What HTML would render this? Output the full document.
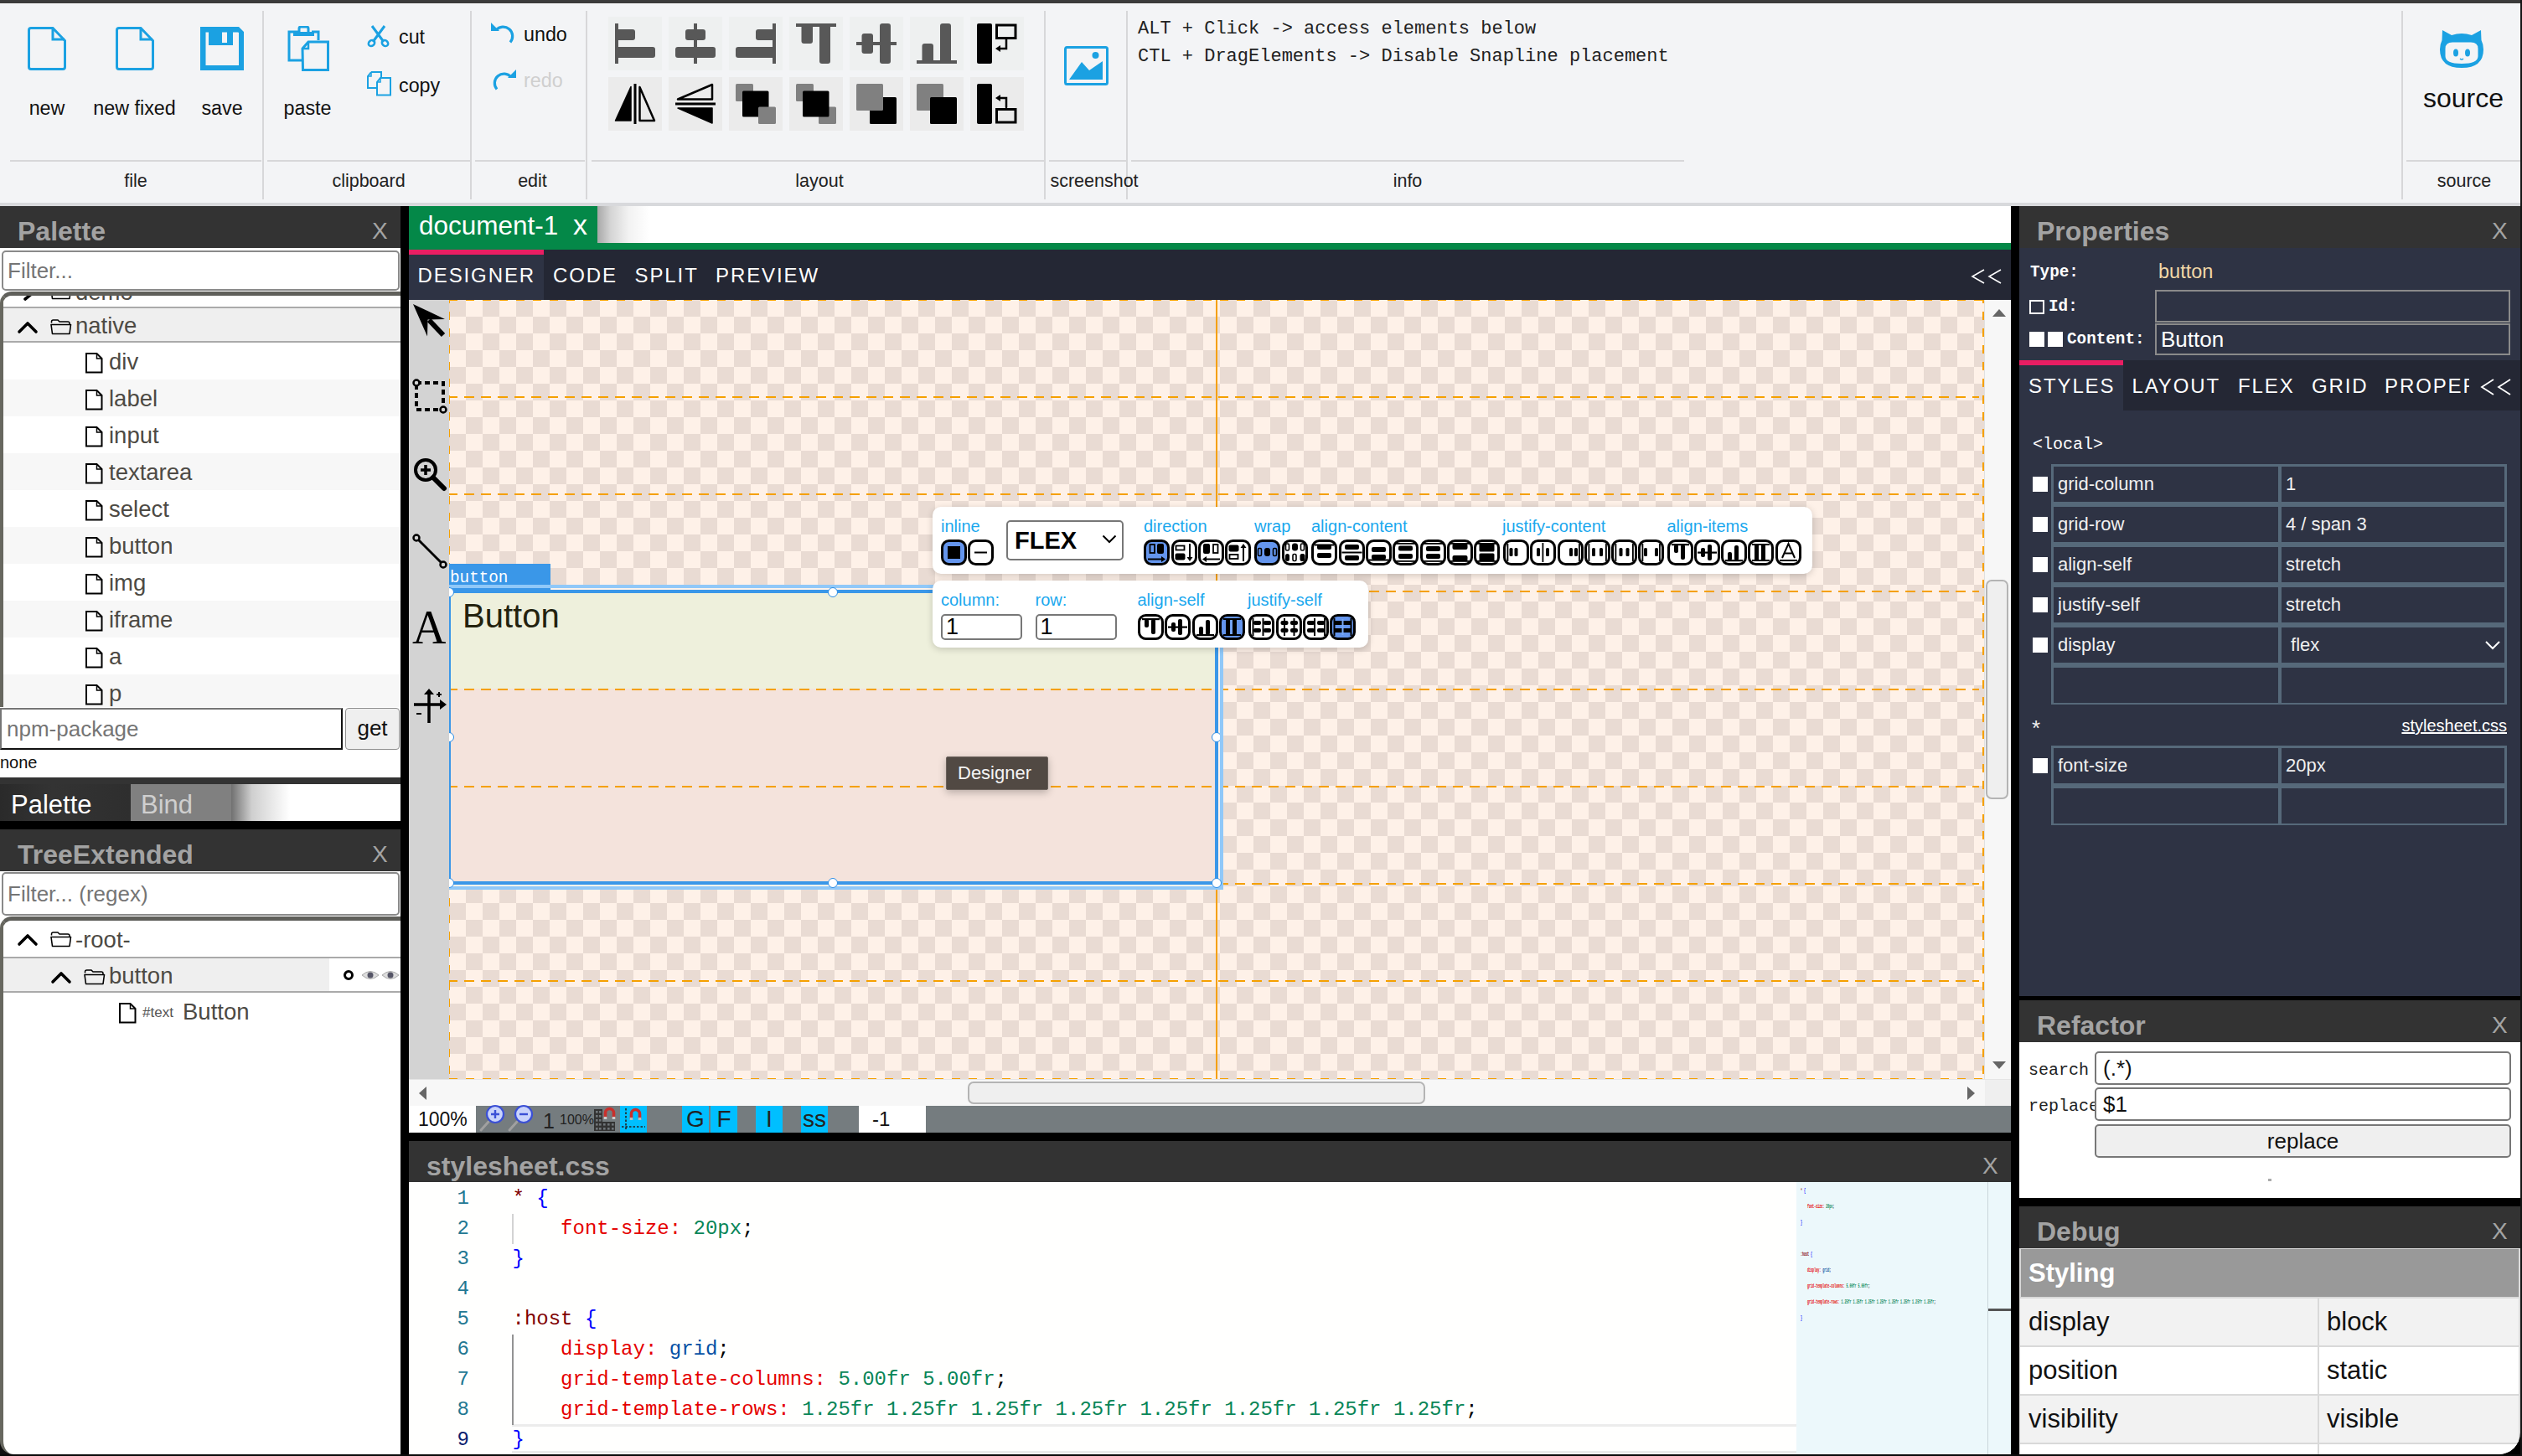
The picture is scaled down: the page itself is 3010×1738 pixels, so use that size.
<!DOCTYPE html>
<html><head><meta charset="utf-8">
<style>
*{box-sizing:border-box;margin:0;padding:0}
html,body{width:3010px;height:1738px;overflow:hidden;background:#000;font-family:"Liberation Sans",sans-serif}
.a{position:absolute}
.mono{font-family:"Liberation Mono",monospace}
#top{left:0;top:0;width:3010px;height:4px;background:#3b3b3b}
#ribbon{left:0;top:4px;width:3008px;height:242px;background:#f3f4f6;border-top:1px solid #fff}
#ribbon .sep{width:2px;background:#d7d7d9;top:8px;height:225px}
#ribbon .hl{height:2px;background:#d7d7d9;top:186px}
#ribbon .gl{top:199px;font-size:21.5px;color:#222;text-align:center}
.bl{font-size:23.3px;color:#111;text-align:center;white-space:nowrap}
#ribbonbottom{left:0;top:242px;width:3008px;height:4px;background:#d8d9dc}
.hdr{background:#333;height:50px}
.hdr .t{left:21px;top:12px;font-size:32px;font-weight:bold;color:#a3a3a3}
.hdr .x{top:14px;font-size:28px;color:#a3a3a3}
.inp{background:#fff;border:2px solid #8a8a8a;border-radius:5px;overflow:hidden}
.inp span{position:absolute;top:50%;transform:translateY(-50%);font-size:26px;color:#757575;white-space:nowrap}
.tbox{border-top:5px solid #5f5f5a;border-left:4px solid #67675f;border-top-left-radius:14px;background:#fff;overflow:hidden}
.row{left:0;width:474px}
.row.sel{background:#efefef;border-top:2px solid #aaa;border-bottom:2px solid #aaa}
.tx{top:50%;transform:translateY(-46%);font-size:27.5px;color:#4d4a44;white-space:nowrap}
.nav{font-size:24px;color:#fff;letter-spacing:1.9px;line-height:30px}
.checker{background:conic-gradient(#fef1e8 25%,#e9dbd3 0 50%,#fef1e8 0 75%,#e9dbd3 0);background-size:40px 40px}
.hd{height:2px;background-image:linear-gradient(90deg,#f5a000 12px,transparent 12px);background-size:20px 2px;background-position:18px 0}
.vd{width:2px;background-image:linear-gradient(180deg,#f5a000 11px,transparent 11px);background-size:2px 20px}
.hdl{width:12px;height:12px;border-radius:50%;background:#fff;border:1.5px solid #2a8de6}
.code{font-size:24px;line-height:36px;white-space:pre}
.mm{font-size:8px;line-height:10px;white-space:pre;transform:scaleX(0.42);transform-origin:0 0;font-weight:bold}
.pl{font-size:19.3px;font-weight:bold;color:#fff;line-height:26px}
.cell{background:#2e3344;font-size:22px;line-height:42px;color:#f0f0f0;text-indent:5px;white-space:nowrap}
.dbg{font-size:31px;line-height:56px;color:#111}
.pop{background:#fff;border-radius:10px;box-shadow:0 2px 8px rgba(0,0,0,.18)}
.plab{font-size:20px;line-height:26px;color:#1aa8ee;white-space:nowrap}
</style></head><body>
<div id="top" class="a"></div>
<div id="ribbon" class="a">
<div class="a sep" style="left:313px"></div>
<div class="a sep" style="left:561px"></div>
<div class="a sep" style="left:699px"></div>
<div class="a sep" style="left:1246px"></div>
<div class="a sep" style="left:1344px"></div>
<div class="a sep" style="left:2866px"></div>
<div class="a hl" style="left:12px;width:300px"></div>
<div class="a hl" style="left:319px;width:242px"></div>
<div class="a hl" style="left:567px;width:131px"></div>
<div class="a hl" style="left:706px;width:540px"></div>
<div class="a hl" style="left:1252px;width:92px"></div>
<div class="a hl" style="left:1350px;width:660px"></div>
<div class="a hl" style="left:2872px;width:136px"></div>
<div class="a gl" style="left:12px;width:300px">file</div>
<div class="a gl" style="left:319px;width:242px">clipboard</div>
<div class="a gl" style="left:567px;width:137px">edit</div>
<div class="a gl" style="left:706px;width:544px">layout</div>
<div class="a gl" style="left:1252px;width:108px">screenshot</div>
<div class="a gl" style="left:1350px;width:660px">info</div>
<div class="a gl" style="left:2872px;width:138px">source</div>
</div>
<div id="ribbonbottom" class="a"></div>
<!-- file icons -->
<svg class="a" style="left:33px;top:32px" width="46" height="52" viewBox="0 0 46 52"><path d="M4 1.5 H30 L44.5 16.5 V48 Q44.5 50.5 42 50.5 H4 Q1.5 50.5 1.5 48 V4 Q1.5 1.5 4 1.5 Z" fill="none" stroke="#1ba1e2" stroke-width="3"/><path d="M30 1.5 V15 H44" fill="none" stroke="#1ba1e2" stroke-width="3"/></svg>
<svg class="a" style="left:138px;top:32px" width="46" height="52" viewBox="0 0 46 52"><path d="M4 1.5 H30 L44.5 16.5 V48 Q44.5 50.5 42 50.5 H4 Q1.5 50.5 1.5 48 V4 Q1.5 1.5 4 1.5 Z" fill="none" stroke="#1ba1e2" stroke-width="3"/><path d="M30 1.5 V15 H44" fill="none" stroke="#1ba1e2" stroke-width="3"/></svg>
<svg class="a" style="left:239px;top:32px" width="53" height="52" viewBox="0 0 53 52"><path d="M0 0 H46 L52 6 V52 H0 Z M6.5 6.5 V46 H46 V7 L45 6.5 H39 V22 H10 V6.5 Z M26 6.5 V19 H32 V6.5 Z" fill="#1ba1e2" fill-rule="evenodd"/></svg>
<div class="a bl" style="left:20px;width:72px;top:115.5px">new</div>
<div class="a bl" style="left:100px;width:121px;top:115.5px">new fixed</div>
<div class="a bl" style="left:229px;width:72px;top:115.5px">save</div>
<!-- clipboard -->
<svg class="a" style="left:343px;top:31px" width="51" height="54" viewBox="0 0 51 54"><path d="M14 7 H2 V41 H17" fill="none" stroke="#1ba1e2" stroke-width="3"/><path d="M29 7 H37 V17" fill="none" stroke="#1ba1e2" stroke-width="3"/><rect x="7" y="7" width="25" height="5" fill="#1ba1e2"/><path d="M14 7 V3 Q14 1 16 1 H23 Q25 1 25 3 V7" fill="none" stroke="#1ba1e2" stroke-width="3"/><path d="M18 27 L25 19 H48.5 V52.5 H18.5 Z" fill="none" stroke="#1ba1e2" stroke-width="3"/><path d="M25 19 V27 H18" fill="none" stroke="#1ba1e2" stroke-width="2.5"/></svg>
<div class="a bl" style="left:326px;width:82px;top:115.5px">paste</div>
<svg class="a" style="left:438px;top:30px" width="27" height="27" viewBox="0 0 27 27"><path d="M6 1 L20 20 M21 1 L7 20" stroke="#1ba1e2" stroke-width="3"/><ellipse cx="5.5" cy="21.5" rx="4" ry="3.2" transform="rotate(-40 5.5 21.5)" fill="none" stroke="#1ba1e2" stroke-width="2.5"/><ellipse cx="21.5" cy="21.5" rx="4" ry="3.2" transform="rotate(40 21.5 21.5)" fill="none" stroke="#1ba1e2" stroke-width="2.5"/></svg>
<div class="a bl" style="left:476px;top:31px">cut</div>
<svg class="a" style="left:438px;top:85px" width="29" height="30" viewBox="0 0 29 30"><path d="M5 1 H17 V8 M12 20 H1 V6 L5 1" fill="none" stroke="#1ba1e2" stroke-width="2"/><path d="M1 6 H5 V1" fill="none" stroke="#1ba1e2" stroke-width="1.5"/><path d="M16 8 H28 V28.5 H12 V13 Z" fill="none" stroke="#1ba1e2" stroke-width="2"/><path d="M16 8 V13 H12" fill="none" stroke="#1ba1e2" stroke-width="1.5"/></svg>
<div class="a bl" style="left:476px;top:88.5px">copy</div>
<!-- edit -->
<svg class="a" style="left:586px;top:27px" width="30" height="26" viewBox="0 0 30 26"><path d="M6 9 A11 11 0 1 1 23 23.5" fill="none" stroke="#1ba1e2" stroke-width="3.2"/><path d="M0 0 V10 H10 Z" fill="#1ba1e2"/></svg>
<div class="a bl" style="left:625px;top:27.5px">undo</div>
<svg class="a" style="left:586px;top:83px" width="30" height="26" viewBox="0 0 30 26"><path d="M24 9 A11 11 0 1 0 7 23.5" fill="none" stroke="#1ba1e2" stroke-width="3.2"/><path d="M30 0 V10 H20 Z" fill="#1ba1e2"/></svg>
<div class="a bl" style="left:625px;top:83px;color:#cfcfcf">redo</div>
<!-- layout -->
<div class="a" style="left:726px;top:20px;width:64px;height:64px;background:#eef0f0"><svg width="64" height="64" viewBox="0 0 64 64"><g fill="#585858"><rect x="8" y="8" width="4" height="48"/><rect x="9" y="15" width="23" height="13" rx="3"/><rect x="9" y="36" width="47" height="13" rx="3"/></g></svg></div>
<div class="a" style="left:798px;top:20px;width:64px;height:64px;background:#eef0f0"><svg width="64" height="64" viewBox="0 0 64 64"><g fill="#585858"><rect x="30" y="8" width="4" height="48"/><rect x="20" y="15" width="24" height="13" rx="3"/><rect x="8" y="36" width="48" height="13" rx="3"/></g></svg></div>
<div class="a" style="left:870px;top:20px;width:64px;height:64px;background:#eef0f0"><svg width="64" height="64" viewBox="0 0 64 64"><g fill="#585858"><rect x="52" y="8" width="4" height="48"/><rect x="32" y="15" width="23" height="13" rx="3"/><rect x="8" y="36" width="47" height="13" rx="3"/></g></svg></div>
<div class="a" style="left:942px;top:20px;width:64px;height:64px;background:#eef0f0"><svg width="64" height="64" viewBox="0 0 64 64"><g fill="#585858"><rect x="8" y="8" width="48" height="4"/><rect x="14.5" y="9" width="13.5" height="23" rx="3"/><rect x="36" y="9" width="13" height="47" rx="3"/></g></svg></div>
<div class="a" style="left:1014px;top:20px;width:64px;height:64px;background:#eef0f0"><svg width="64" height="64" viewBox="0 0 64 64"><g fill="#585858"><rect x="8" y="30" width="48" height="4"/><rect x="14.5" y="20" width="13.5" height="24" rx="3"/><rect x="36" y="8" width="13" height="48" rx="3"/></g></svg></div>
<div class="a" style="left:1086px;top:20px;width:64px;height:64px;background:#eef0f0"><svg width="64" height="64" viewBox="0 0 64 64"><g fill="#585858"><rect x="8" y="52" width="48" height="4"/><rect x="14.5" y="32" width="13.5" height="23" rx="3"/><rect x="36" y="8" width="13" height="47" rx="3"/></g></svg></div>
<div class="a" style="left:1158px;top:20px;width:64px;height:64px;background:#eef0f0"><svg width="64" height="64" viewBox="0 0 64 64"><rect x="8" y="8" width="18" height="48" rx="2"/><rect x="31.5" y="10" width="22.5" height="15.5" fill="none" stroke="#000" stroke-width="3"/><path d="M43 27 V38 H34" fill="none" stroke="#000" stroke-width="2.5" stroke-linecap="round"/><path d="M30 38 L36 34 V42 Z"/></svg></div>
<div class="a" style="left:726px;top:92px;width:64px;height:64px;background:#ebebeb"><svg width="64" height="64" viewBox="0 0 64 64"><path d="M27 11.5 L8.5 52 H27 Z" stroke="#000" stroke-width="1.5" stroke-linejoin="round"/><rect x="30.5" y="8" width="3" height="48"/><path d="M37.5 12 V52 H55 Z" fill="none" stroke="#000" stroke-width="2.5" stroke-linejoin="round"/></svg></div>
<div class="a" style="left:798px;top:92px;width:64px;height:64px;background:#ebebeb"><svg width="64" height="64" viewBox="0 0 64 64"><path d="M11 26.5 L52 9 V26.5 Z" fill="none" stroke="#000" stroke-width="2.5" stroke-linejoin="round"/><rect x="8" y="30.5" width="48" height="3"/><path d="M11 37 H52 V55 Z" stroke="#000" stroke-width="1.5" stroke-linejoin="round"/></svg></div>
<div class="a" style="left:870px;top:92px;width:64px;height:64px;background:#ebebeb"><svg width="64" height="64" viewBox="0 0 64 64"><rect x="8" y="8" width="21" height="21" rx="1.5" fill="#808080"/><rect x="16" y="16.5" width="31.5" height="31" rx="1.5"/><rect x="35" y="35.5" width="21" height="20.5" rx="1.5" fill="#808080"/></svg></div>
<div class="a" style="left:942px;top:92px;width:64px;height:64px;background:#ebebeb"><svg width="64" height="64" viewBox="0 0 64 64"><rect x="8" y="8" width="21" height="21" rx="1.5" fill="#808080"/><rect x="35" y="35.5" width="21" height="20.5" rx="1.5" fill="#808080"/><rect x="16" y="16.5" width="31.5" height="31" rx="1.5"/></svg></div>
<div class="a" style="left:1014px;top:92px;width:64px;height:64px;background:#ebebeb"><svg width="64" height="64" viewBox="0 0 64 64"><rect x="24" y="24" width="32" height="32" rx="1.5"/><rect x="8" y="8" width="32" height="32" rx="1.5" fill="#808080"/></svg></div>
<div class="a" style="left:1086px;top:92px;width:64px;height:64px;background:#ebebeb"><svg width="64" height="64" viewBox="0 0 64 64"><rect x="8" y="8" width="32" height="32" rx="1.5" fill="#808080"/><rect x="24" y="24" width="32" height="32" rx="1.5"/></svg></div>
<div class="a" style="left:1158px;top:92px;width:64px;height:64px;background:#ebebeb"><svg width="64" height="64" viewBox="0 0 64 64"><rect x="8" y="8" width="18" height="48" rx="2"/><rect x="31.5" y="38.5" width="22.5" height="15.5" fill="none" stroke="#000" stroke-width="3"/><path d="M43 36 V25 H34" fill="none" stroke="#000" stroke-width="2.5" stroke-linecap="round"/><path d="M30 25 L36 21 V29 Z"/></svg></div>
<!-- screenshot -->
<svg class="a" style="left:1270px;top:55px" width="53" height="47" viewBox="0 0 53 47"><rect x="1.5" y="1.5" width="50" height="44" rx="2" fill="none" stroke="#1ba1e2" stroke-width="3"/><circle cx="37.5" cy="11" r="4" fill="#1ba1e2"/><path d="M6 40 L21 19 L30 29 L46 18 V40 Z" fill="#1ba1e2"/></svg>
<!-- info -->
<div class="a mono" style="left:1358px;top:17.5px;font-size:22px;line-height:33px;color:#222;white-space:pre">ALT + Click -&gt; access elements below
CTL + DragElements -&gt; Disable Snapline placement</div>
<!-- source -->
<svg class="a" style="left:2911px;top:35px" width="54" height="47" viewBox="0 0 54 47"><path d="M4 1 L15 7 Q27 3 39 7 L50 1 L50.5 13 Q53 18 53 24 Q53 46 27 46 Q1 46 1 24 Q1 18 3.5 13 Z" fill="#1ba1e2"/><path d="M7.5 23 Q7.5 15.5 16 15.5 H38 Q46.5 15.5 46.5 23 V32 Q46.5 41 27 41 Q7.5 41 7.5 32 Z" fill="#f3f4f6"/><ellipse cx="20" cy="28" rx="3" ry="4.5" fill="#1ba1e2"/><ellipse cx="34" cy="28" rx="3" ry="4.5" fill="#1ba1e2"/><path d="M25 35 Q27 37 29 35" fill="none" stroke="#1ba1e2" stroke-width="1.2"/></svg>
<div class="a" style="left:2872px;width:136px;top:99px;font-size:32px;color:#111;text-align:center">source</div>


<!-- LEFT PANEL -->
<div class="a" style="left:0;top:246px;width:478px;height:1492px;background:#fff"></div>
<div class="a hdr" style="left:0;top:246px;width:478px"><div class="a t">Palette</div><div class="a x" style="left:444px">X</div></div>
<div class="a inp" style="left:2px;top:299px;width:475px;height:48px"><span style="left:5px">Filter...</span></div>
<div class="a tbox" style="left:0;top:348px;width:478px;height:496px">
 <div class="a" style="left:0;top:0;width:474px;height:496px;overflow:hidden">
  <div class="a row" style="top:-27px;height:44px;background:#fff"><svg class="a" style="left:18px;top:12px" width="26" height="22" viewBox="0 0 26 22"><path d="M8 3 L18 11 L8 19" fill="none" stroke="#000" stroke-width="3.6" stroke-linecap="round" stroke-linejoin="round"/></svg><svg class="a" style="left:56px;top:13px" width="26" height="19" viewBox="0 0 26 19"><path d="M1.5 4.5 V3 Q1.5 1 3.5 1 H9 L11 3 H21 Q23 3 23 5 V6" fill="none" stroke="#000" stroke-width="1.5"/><path d="M1 6.5 H24.5 L23 17.5 H2.5 Z" fill="none" stroke="#000" stroke-width="1.6" stroke-linejoin="round"/></svg><span class="a tx" style="left:86px">demo</span></div>
  <div class="a row sel" style="top:13px;height:43px"><svg class="a" style="left:16px;top:14px" width="26" height="17" viewBox="0 0 26 17"><path d="M3 14 L13 4 L23 14" fill="none" stroke="#000" stroke-width="3.6" stroke-linecap="round" stroke-linejoin="round"/></svg><svg class="a" style="left:56px;top:13px" width="26" height="19" viewBox="0 0 26 19"><path d="M1.5 4.5 V3 Q1.5 1 3.5 1 H9 L11 3 H21 Q23 3 23 5 V6" fill="none" stroke="#000" stroke-width="1.5"/><path d="M1 6.5 H24.5 L23 17.5 H2.5 Z" fill="none" stroke="#000" stroke-width="1.6" stroke-linejoin="round"/></svg><span class="a tx" style="left:86px">native</span></div>
 <div class="a row" style="top:56px;height:44px;background:#fff"><svg class="a" style="left:98px;top:12px" width="22" height="25" viewBox="0 0 22 25"><path d="M1 1 H13.5 L19.5 7 V23.5 H1 Z" fill="#fff" stroke="#000" stroke-width="2" stroke-linejoin="miter"/><path d="M13.5 1 V7 H19.5" fill="none" stroke="#000" stroke-width="1.5"/></svg><span class="a tx" style="left:126px">div</span></div>
<div class="a row" style="top:100px;height:44px;background:#f7f7f7"><svg class="a" style="left:98px;top:12px" width="22" height="25" viewBox="0 0 22 25"><path d="M1 1 H13.5 L19.5 7 V23.5 H1 Z" fill="#fff" stroke="#000" stroke-width="2" stroke-linejoin="miter"/><path d="M13.5 1 V7 H19.5" fill="none" stroke="#000" stroke-width="1.5"/></svg><span class="a tx" style="left:126px">label</span></div>
<div class="a row" style="top:144px;height:44px;background:#fff"><svg class="a" style="left:98px;top:12px" width="22" height="25" viewBox="0 0 22 25"><path d="M1 1 H13.5 L19.5 7 V23.5 H1 Z" fill="#fff" stroke="#000" stroke-width="2" stroke-linejoin="miter"/><path d="M13.5 1 V7 H19.5" fill="none" stroke="#000" stroke-width="1.5"/></svg><span class="a tx" style="left:126px">input</span></div>
<div class="a row" style="top:188px;height:44px;background:#f7f7f7"><svg class="a" style="left:98px;top:12px" width="22" height="25" viewBox="0 0 22 25"><path d="M1 1 H13.5 L19.5 7 V23.5 H1 Z" fill="#fff" stroke="#000" stroke-width="2" stroke-linejoin="miter"/><path d="M13.5 1 V7 H19.5" fill="none" stroke="#000" stroke-width="1.5"/></svg><span class="a tx" style="left:126px">textarea</span></div>
<div class="a row" style="top:232px;height:44px;background:#fff"><svg class="a" style="left:98px;top:12px" width="22" height="25" viewBox="0 0 22 25"><path d="M1 1 H13.5 L19.5 7 V23.5 H1 Z" fill="#fff" stroke="#000" stroke-width="2" stroke-linejoin="miter"/><path d="M13.5 1 V7 H19.5" fill="none" stroke="#000" stroke-width="1.5"/></svg><span class="a tx" style="left:126px">select</span></div>
<div class="a row" style="top:276px;height:44px;background:#f7f7f7"><svg class="a" style="left:98px;top:12px" width="22" height="25" viewBox="0 0 22 25"><path d="M1 1 H13.5 L19.5 7 V23.5 H1 Z" fill="#fff" stroke="#000" stroke-width="2" stroke-linejoin="miter"/><path d="M13.5 1 V7 H19.5" fill="none" stroke="#000" stroke-width="1.5"/></svg><span class="a tx" style="left:126px">button</span></div>
<div class="a row" style="top:320px;height:44px;background:#fff"><svg class="a" style="left:98px;top:12px" width="22" height="25" viewBox="0 0 22 25"><path d="M1 1 H13.5 L19.5 7 V23.5 H1 Z" fill="#fff" stroke="#000" stroke-width="2" stroke-linejoin="miter"/><path d="M13.5 1 V7 H19.5" fill="none" stroke="#000" stroke-width="1.5"/></svg><span class="a tx" style="left:126px">img</span></div>
<div class="a row" style="top:364px;height:44px;background:#f7f7f7"><svg class="a" style="left:98px;top:12px" width="22" height="25" viewBox="0 0 22 25"><path d="M1 1 H13.5 L19.5 7 V23.5 H1 Z" fill="#fff" stroke="#000" stroke-width="2" stroke-linejoin="miter"/><path d="M13.5 1 V7 H19.5" fill="none" stroke="#000" stroke-width="1.5"/></svg><span class="a tx" style="left:126px">iframe</span></div>
<div class="a row" style="top:408px;height:44px;background:#fff"><svg class="a" style="left:98px;top:12px" width="22" height="25" viewBox="0 0 22 25"><path d="M1 1 H13.5 L19.5 7 V23.5 H1 Z" fill="#fff" stroke="#000" stroke-width="2" stroke-linejoin="miter"/><path d="M13.5 1 V7 H19.5" fill="none" stroke="#000" stroke-width="1.5"/></svg><span class="a tx" style="left:126px">a</span></div>
<div class="a row" style="top:452px;height:44px;background:#f7f7f7"><svg class="a" style="left:98px;top:12px" width="22" height="25" viewBox="0 0 22 25"><path d="M1 1 H13.5 L19.5 7 V23.5 H1 Z" fill="#fff" stroke="#000" stroke-width="2" stroke-linejoin="miter"/><path d="M13.5 1 V7 H19.5" fill="none" stroke="#000" stroke-width="1.5"/></svg><span class="a tx" style="left:126px">p</span></div>
 </div>
</div>
<div class="a inp" style="left:0;top:845px;width:409px;height:50px;border-radius:0;border-color:#767676 #111 #111 #767676"><span style="left:6px">npm-package</span></div>
<div class="a" style="left:412px;top:845px;width:65px;height:50px;background:#efefef;border:1px solid #8f8f8f;border-radius:4px;font-size:26px;text-align:center;line-height:47px;color:#111">get</div>
<div class="a" style="left:0;top:897px;font-size:20px;color:#111;line-height:26px">none</div>
<div class="a" style="left:0;top:928px;width:478px;height:52px;background:#fff"></div>
<div class="a" style="left:0;top:928px;width:478px;height:8px;background:#333"></div>
<div class="a" style="left:0;top:936px;width:156px;height:44px;background:linear-gradient(90deg,#2a2a2a,#333 40%,#2e2e2e)"></div>
<div class="a" style="left:156px;top:936px;width:120px;height:44px;background:#808080"></div>
<div class="a" style="left:276px;top:936px;width:70px;height:44px;background:linear-gradient(90deg,#707070,#cfcfcf 35%,#fff)"></div>
<div class="a" style="left:13px;top:940px;font-size:31px;color:#fff;line-height:42px">Palette</div>
<div class="a" style="left:168px;top:940px;font-size:31px;color:#cfcfcf;line-height:42px">Bind</div>
<div class="a" style="left:0;top:980px;width:478px;height:10px;background:#000"></div>
<div class="a hdr" style="left:0;top:990px;width:478px"><div class="a t" style="left:21px">TreeExtended</div><div class="a x" style="left:444px">X</div></div>
<div class="a inp" style="left:2px;top:1041px;width:475px;height:52px"><span style="left:5px">Filter... (regex)</span></div>
<div class="a" style="left:0;top:1700px;width:40px;height:38px;background:#111"></div>
<div class="a tbox" style="left:0;top:1094px;width:478px;height:642px;border-bottom-left-radius:16px">
  <div class="a row" style="top:0;height:44px;background:#fff"><svg class="a" style="left:16px;top:14px" width="26" height="17" viewBox="0 0 26 17"><path d="M3 14 L13 4 L23 14" fill="none" stroke="#000" stroke-width="3.6" stroke-linecap="round" stroke-linejoin="round"/></svg><svg class="a" style="left:56px;top:13px" width="26" height="19" viewBox="0 0 26 19"><path d="M1.5 4.5 V3 Q1.5 1 3.5 1 H9 L11 3 H21 Q23 3 23 5 V6" fill="none" stroke="#000" stroke-width="1.5"/><path d="M1 6.5 H24.5 L23 17.5 H2.5 Z" fill="none" stroke="#000" stroke-width="1.6" stroke-linejoin="round"/></svg><span class="a tx" style="left:86px">-root-</span></div>
  <div class="a row sel" style="top:43px;height:43px;width:389px"><svg class="a" style="left:56px;top:14px" width="26" height="17" viewBox="0 0 26 17"><path d="M3 14 L13 4 L23 14" fill="none" stroke="#000" stroke-width="3.6" stroke-linecap="round" stroke-linejoin="round"/></svg><svg class="a" style="left:96px;top:13px" width="26" height="19" viewBox="0 0 26 19"><path d="M1.5 4.5 V3 Q1.5 1 3.5 1 H9 L11 3 H21 Q23 3 23 5 V6" fill="none" stroke="#000" stroke-width="1.5"/><path d="M1 6.5 H24.5 L23 17.5 H2.5 Z" fill="none" stroke="#000" stroke-width="1.6" stroke-linejoin="round"/></svg><span class="a tx" style="left:126px">button</span></div>
  <div class="a" style="left:389px;top:43px;width:85px;height:43px;background:#fff;border-top:2px solid #aaa;border-bottom:2px solid #aaa"></div>
  <svg class="a" style="left:404px;top:57px" width="72" height="16" viewBox="0 0 72 16"><circle cx="8" cy="8" r="4.5" fill="none" stroke="#000" stroke-width="3"/><path d="M24 8 Q34 -1 44 8 Q34 17 24 8 Z" fill="#ddd" stroke="#aaa" stroke-width="1"/><circle cx="34" cy="8" r="3.5" fill="#556"/><path d="M48 8 Q58 -1 68 8 Q58 17 48 8 Z" fill="#ddd" stroke="#aaa" stroke-width="1"/><circle cx="58" cy="8" r="3.5" fill="#556"/></svg>
  <div class="a row" style="top:86px;height:44px;background:#fff"><svg class="a" style="left:138px;top:12px" width="22" height="25" viewBox="0 0 22 25"><path d="M1 1 H13.5 L19.5 7 V23.5 H1 Z" fill="#fff" stroke="#000" stroke-width="2" stroke-linejoin="miter"/><path d="M13.5 1 V7 H19.5" fill="none" stroke="#000" stroke-width="1.5"/></svg><span class="a" style="left:166px;top:14px;font-size:17px;color:#555">#text</span><span class="a tx" style="left:214px">Button</span></div>
</div>
<div class="a" style="left:478px;top:246px;width:10px;height:1492px;background:#000"></div>

<!-- CENTER -->
<div class="a" style="left:488px;top:246px;width:1912px;height:44px;background:#fff"></div>
<div class="a" style="left:713px;top:246px;width:62px;height:44px;background:linear-gradient(90deg,#a8a8a8,#d4d4d4 25%,#f2f2f2 60%,#fff)"></div>
<div class="a" style="left:488px;top:246px;width:225px;height:44px;background:#048848"></div>
<div class="a" style="left:500px;top:250px;font-size:31.5px;color:#fff;line-height:38px;white-space:pre">document-1</div>
<div class="a" style="left:684px;top:249px;font-size:34px;color:#fff;line-height:38px">x</div>
<div class="a" style="left:488px;top:290px;width:1912px;height:8px;background:#048848"></div>
<div class="a" style="left:488px;top:298px;width:1912px;height:60px;background:#242734"></div>
<div class="a" style="left:488px;top:298px;width:161px;height:60px;background:#2e3344"></div>
<div class="a" style="left:488px;top:298px;width:161px;height:6px;background:#e91e63"></div>
<div class="a nav" style="left:498.5px;top:314px">DESIGNER</div>
<div class="a nav" style="left:660px;top:314px">CODE</div>
<div class="a nav" style="left:757.5px;top:314px">SPLIT</div>
<div class="a nav" style="left:854px;top:314px">PREVIEW</div>
<svg class="a" style="left:2352px;top:320px" width="38" height="20" viewBox="0 0 38 20"><path d="M16 2 L2 10 L16 18 M36 2 L22 10 L36 18" fill="none" stroke="#fff" stroke-width="1.6"/></svg>
<div class="a" style="left:488px;top:358px;width:48px;height:930px;background:#d3d3d3"></div>
<div class="a checker" style="left:536px;top:358px;width:1833px;height:930px"></div>
<div class="a" style="left:536px;top:706px;width:916px;height:116px;background:#eef0dc"></div>
<div class="a" style="left:536px;top:822px;width:916px;height:232px;background:#f4e3dc"></div>
<div class="a" style="left:536px;top:358px;width:1831px;height:1.2px;background-image:linear-gradient(90deg,#f5a000 10px,transparent 10px);background-size:20px 2px"></div>
<div class="a hd" style="left:536px;top:473.12px;width:1826px"></div>
<div class="a hd" style="left:536px;top:589.25px;width:1826px"></div>
<div class="a hd" style="left:536px;top:705.38px;width:1826px"></div>
<div class="a hd" style="left:536px;top:821.50px;width:1826px"></div>
<div class="a hd" style="left:536px;top:937.62px;width:1826px"></div>
<div class="a hd" style="left:536px;top:1053.75px;width:1826px"></div>
<div class="a hd" style="left:536px;top:1169.88px;width:1826px"></div>
<div class="a" style="left:536px;top:1286.5px;width:1831px;height:1.2px;background-image:linear-gradient(90deg,#f5a000 10px,transparent 10px);background-size:20px 2px"></div>
<div class="a" style="left:536px;top:358px;width:1.2px;height:930px;background-image:linear-gradient(180deg,#f5a000 10px,transparent 10px);background-size:2px 20px;background-position:0 14px"></div>
<div class="a" style="left:1451px;top:358px;width:2px;height:930px;background:#f5a000"></div>
<div class="a" style="left:2366px;top:358px;width:1.5px;height:930px;background-image:linear-gradient(180deg,#f5a000 10px,transparent 10px);background-size:2px 20px;background-position:0 14px"></div>
<div class="a" style="left:536px;top:698px;width:924px;height:364px;border:4px solid #90c8f8;border-left:0"></div>
<div class="a" style="left:536px;top:702px;width:918px;height:2px;background:#fdf3ec"></div>
<div class="a" style="left:1454px;top:702px;width:2px;height:356px;background:#fdf3ec"></div>
<div class="a" style="left:536px;top:1056px;width:918px;height:2px;background:#fdf3ec"></div>
<div class="a" style="left:534px;top:704px;width:920px;height:352px;border:4px solid #3a97e8"></div>
<div class="a" style="left:536px;top:673px;width:121px;height:25px;background:#3a97e8"></div>
<div class="a" style="left:536px;top:702px;width:121px;height:2px;background:#3a97e8"></div>
<div class="a mono" style="left:537px;top:678px;font-size:19.3px;color:#fff;line-height:24px">button</div>
<div class="a hdl" style="left:530px;top:700.5px"></div>
<div class="a hdl" style="left:988px;top:700.5px"></div>
<div class="a hdl" style="left:1446px;top:700.5px"></div>
<div class="a hdl" style="left:530px;top:874px"></div>
<div class="a hdl" style="left:1446px;top:874px"></div>
<div class="a hdl" style="left:530px;top:1048px"></div>
<div class="a hdl" style="left:988px;top:1048px"></div>
<div class="a hdl" style="left:1446px;top:1048px"></div>
<div class="a" style="left:1456px;top:870px;width:4px;height:20px;background:#90c8f8"></div>
<div class="a" style="left:488px;top:358px;width:48px;height:930px;background:#d3d3d3"></div>
<div class="a" style="left:552px;top:712px;font-size:40px;color:#23220e;line-height:46px">Button</div>
<div class="a" style="left:2368px;top:358px;width:32px;height:930px;background:#f7f7f7;border-left:1px solid #e0e0e0"></div>
<div class="a" style="left:2370px;top:692px;width:27px;height:262px;background:#efefef;border:2px solid #b4b4b4;border-radius:7px"></div>
<svg class="a" style="left:2377px;top:367px" width="18" height="12"><path d="M1 11 L9 2 L17 11 Z" fill="#666"/></svg>
<svg class="a" style="left:2377px;top:1266px" width="18" height="12"><path d="M1 1 L9 10 L17 1 Z" fill="#666"/></svg>
<div class="a" style="left:488px;top:1288px;width:1912px;height:32px;background:#f7f7f7;border-top:1px solid #e5e5e5"></div>
<div class="a" style="left:1155px;top:1291px;width:546px;height:27px;background:#efefef;border:2px solid #b4b4b4;border-radius:7px"></div>
<div class="a" style="left:2369px;top:1289px;width:31px;height:31px;background:#efefef"></div>
<svg class="a" style="left:498px;top:1296px" width="12" height="18"><path d="M11 1 L2 9 L11 17 Z" fill="#666"/></svg>
<svg class="a" style="left:2347px;top:1296px" width="12" height="18"><path d="M1 1 L10 9 L1 17 Z" fill="#666"/></svg>
<div class="a" style="left:488px;top:1320px;width:1912px;height:32px;background:#757c7f"></div>
<div class="a" style="left:488px;top:1320px;width:80px;height:32px;background:#fff;font-size:23px;line-height:32px;text-indent:11px;color:#111">100%</div>
<svg class="a" style="left:570px;top:1318px" width="70" height="34" viewBox="0 0 70 34"><g><line x1="4" y1="31" x2="13" y2="21" stroke="#a0a0a0" stroke-width="3" stroke-linecap="round"/><circle cx="21" cy="12" r="10" fill="#c9d3fb" stroke="#3b50d6" stroke-width="2.2"/><path d="M16 12 H26 M21 7 V17" stroke="#3b50d6" stroke-width="2.4"/></g><g transform="translate(34 0)"><line x1="4" y1="31" x2="13" y2="21" stroke="#a0a0a0" stroke-width="3" stroke-linecap="round"/><circle cx="21" cy="12" r="10" fill="#c9d3fb" stroke="#3b50d6" stroke-width="2.2"/><path d="M16 12 H26" stroke="#3b50d6" stroke-width="2.4"/></g></svg>
<div class="a" style="left:648px;top:1322px;font-size:25px;line-height:32px;color:#222">1</div>
<div class="a" style="left:668px;top:1326px;font-size:16px;line-height:22px;color:#222">100%</div>
<svg class="a" style="left:707px;top:1321px" width="30" height="30" viewBox="0 0 30 30"><path d="M2 3 H12 V18 H27 V29 H2 Z" fill="#333"/><g fill="#6f7579"><rect x="4" y="5" width="2.6" height="2.6"/><rect x="8" y="5" width="2.6" height="2.6"/><rect x="4" y="10" width="2.6" height="2.6"/><rect x="8" y="10" width="2.6" height="2.6"/><rect x="4" y="15" width="2.6" height="2.6"/><rect x="8" y="15" width="2.6" height="2.6"/><rect x="4" y="20" width="2.6" height="2.6"/><rect x="8" y="20" width="2.6" height="2.6"/><rect x="4" y="25" width="2.6" height="2.6"/><rect x="8" y="25" width="2.6" height="2.6"/><rect x="13" y="20" width="2.6" height="2.6"/><rect x="18" y="20" width="2.6" height="2.6"/><rect x="23" y="20" width="2.6" height="2.6"/><rect x="13" y="25" width="2.6" height="2.6"/><rect x="18" y="25" width="2.6" height="2.6"/><rect x="23" y="25" width="2.6" height="2.6"/></g><path d="M15.5 14 V7.5 A5 5 0 0 1 25.5 7.5 V14" fill="none" stroke="#c9302c" stroke-width="3.6"/><path d="M15.5 12 V15 M25.5 12 V15" stroke="#ccc" stroke-width="3.6"/></svg>
<div class="a" style="left:740px;top:1320px;width:32px;height:32px;background:#00bfff"></div>
<svg class="a" style="left:740px;top:1321px" width="32" height="30" viewBox="0 0 32 30"><path d="M7 2 V29 M2 24 H30" stroke="#222" stroke-width="1.6" stroke-dasharray="2.5 2"/><path d="M13.5 15 V8.5 A5 5 0 0 1 23.5 8.5 V15" fill="none" stroke="#c9302c" stroke-width="3.6"/><path d="M13.5 13 V16 M23.5 13 V16" stroke="#bbb" stroke-width="3.6"/></svg>
<div class="a" style="left:814px;top:1320px;width:32px;height:32px;background:#00bfff;color:#222;font-size:28px;line-height:32px;text-align:center">G</div>
<div class="a" style="left:848px;top:1320px;width:32px;height:32px;background:#00bfff;color:#222;font-size:28px;line-height:32px;text-align:center">F</div>
<div class="a" style="left:902px;top:1320px;width:32px;height:32px;background:#00bfff;color:#222;font-size:28px;line-height:32px;text-align:center">I</div>
<div class="a" style="left:956px;top:1320px;width:32px;height:32px;background:#00bfff;color:#222;font-size:28px;line-height:32px;text-align:center">ss</div>
<div class="a" style="left:1025px;top:1320px;width:80px;height:32px;background:#fff;font-size:24px;line-height:32px;text-indent:16px;color:#111">-1</div>
<div class="a" style="left:488px;top:1352px;width:1912px;height:10px;background:#000"></div>
<div class="a hdr" style="left:488px;top:1362px;width:1912px;height:49px"><div class="a t" style="left:21px">stylesheet.css</div><div class="a x" style="left:1878px">X</div></div>
<div class="a" style="left:488px;top:1411px;width:1912px;height:327px;background:#fffffe"></div><div class="a" style="left:611px;top:1700px;width:1533px;height:35px;border-top:3px solid #ececec;border-bottom:3px solid #eaeaea"></div>
<div class="a" style="left:611px;top:1449px;width:2px;height:36px;background:#d3d3d3"></div>
<div class="a" style="left:611px;top:1593px;width:2px;height:108px;background:#939393"></div>
<div class="a mono" style="left:520px;width:40px;text-align:right;top:1413px;font-size:24px;line-height:36px;color:#237893">1</div>
<div class="a mono code" style="left:611.5px;top:1413px"><span style="color:#800000">*</span><span style="color:#000"> </span><span style="color:#0000ff">{</span></div>
<div class="a mono" style="left:520px;width:40px;text-align:right;top:1449px;font-size:24px;line-height:36px;color:#237893">2</div>
<div class="a mono code" style="left:611.5px;top:1449px"><span style="color:#e50000">    font-size:</span><span style="color:#000"> </span><span style="color:#098658">20px</span><span style="color:#000">;</span></div>
<div class="a mono" style="left:520px;width:40px;text-align:right;top:1485px;font-size:24px;line-height:36px;color:#237893">3</div>
<div class="a mono code" style="left:611.5px;top:1485px"><span style="color:#0000ff">}</span></div>
<div class="a mono" style="left:520px;width:40px;text-align:right;top:1521px;font-size:24px;line-height:36px;color:#237893">4</div>
<div class="a mono" style="left:520px;width:40px;text-align:right;top:1557px;font-size:24px;line-height:36px;color:#237893">5</div>
<div class="a mono code" style="left:611.5px;top:1557px"><span style="color:#800000">:host</span><span style="color:#000"> </span><span style="color:#0000ff">{</span></div>
<div class="a mono" style="left:520px;width:40px;text-align:right;top:1593px;font-size:24px;line-height:36px;color:#237893">6</div>
<div class="a mono code" style="left:611.5px;top:1593px"><span style="color:#e50000">    display:</span><span style="color:#000"> </span><span style="color:#0451a5">grid</span><span style="color:#000">;</span></div>
<div class="a mono" style="left:520px;width:40px;text-align:right;top:1629px;font-size:24px;line-height:36px;color:#237893">7</div>
<div class="a mono code" style="left:611.5px;top:1629px"><span style="color:#e50000">    grid-template-columns:</span><span style="color:#000"> </span><span style="color:#098658">5.00fr 5.00fr</span><span style="color:#000">;</span></div>
<div class="a mono" style="left:520px;width:40px;text-align:right;top:1665px;font-size:24px;line-height:36px;color:#237893">8</div>
<div class="a mono code" style="left:611.5px;top:1665px"><span style="color:#e50000">    grid-template-rows:</span><span style="color:#000"> </span><span style="color:#098658">1.25fr 1.25fr 1.25fr 1.25fr 1.25fr 1.25fr 1.25fr 1.25fr</span><span style="color:#000">;</span></div>
<div class="a mono" style="left:520px;width:40px;text-align:right;top:1701px;font-size:24px;line-height:36px;color:#0b216f">9</div>
<div class="a mono code" style="left:611.5px;top:1701px"><span style="color:#0000ff">}</span></div>
<div class="a" style="left:2144px;top:1411px;width:256px;height:327px;background:#ecf8fb"></div>
<div class="a" style="left:2372px;top:1411px;width:1px;height:327px;background:#c9d6da"></div>
<div class="a" style="left:2373px;top:1562px;width:27px;height:3px;background:#555"></div>
<div class="a mono mm" style="left:2149px;top:1416px"><span style="color:#800000">*</span><span style="color:#000"> </span><span style="color:#0000ff">{</span></div>
<div class="a mono mm" style="left:2149px;top:1435px"><span style="color:#e50000">    font-size:</span><span style="color:#000"> </span><span style="color:#098658">20px</span><span style="color:#000">;</span></div>
<div class="a mono mm" style="left:2149px;top:1454px"><span style="color:#0000ff">}</span></div>
<div class="a mono mm" style="left:2149px;top:1492px"><span style="color:#800000">:host</span><span style="color:#000"> </span><span style="color:#0000ff">{</span></div>
<div class="a mono mm" style="left:2149px;top:1511px"><span style="color:#e50000">    display:</span><span style="color:#000"> </span><span style="color:#0451a5">grid</span><span style="color:#000">;</span></div>
<div class="a mono mm" style="left:2149px;top:1530px"><span style="color:#e50000">    grid-template-columns:</span><span style="color:#000"> </span><span style="color:#098658">5.00fr 5.00fr</span><span style="color:#000">;</span></div>
<div class="a mono mm" style="left:2149px;top:1549px"><span style="color:#e50000">    grid-template-rows:</span><span style="color:#000"> </span><span style="color:#098658">1.25fr 1.25fr 1.25fr 1.25fr 1.25fr 1.25fr 1.25fr 1.25fr</span><span style="color:#000">;</span></div>
<div class="a mono mm" style="left:2149px;top:1568px"><span style="color:#0000ff">}</span></div>
<svg class="a" style="left:492px;top:362px" width="42" height="42" viewBox="0 0 42 42"><path d="M1 1 L39 19 L18.5 19.5 L18 39.5 Z" fill="#000"/><path d="M20 20 L37 38" stroke="#000" stroke-width="6"/></svg>
<svg class="a" style="left:492px;top:452px" width="42" height="42" viewBox="0 0 42 42"><rect x="5" y="5" width="32" height="32" fill="none" stroke="#000" stroke-width="4" stroke-dasharray="6 4"/><circle cx="5" cy="5" r="3.5" fill="#d3d3d3" stroke="#000" stroke-width="2.5"/><circle cx="37" cy="37" r="3.5" fill="#d3d3d3" stroke="#000" stroke-width="2.5"/></svg>
<svg class="a" style="left:492px;top:545px" width="42" height="42" viewBox="0 0 42 42"><circle cx="16" cy="16" r="12" fill="none" stroke="#000" stroke-width="4"/><path d="M10 16 H22 M16 10 V22" stroke="#000" stroke-width="3.5"/><path d="M25 25 L38 38" stroke="#000" stroke-width="6" stroke-linecap="round"/></svg>
<svg class="a" style="left:492px;top:637px" width="42" height="42" viewBox="0 0 42 42"><path d="M6 6 L36 36" stroke="#000" stroke-width="3"/><circle cx="5" cy="5" r="3.5" fill="#d3d3d3" stroke="#000" stroke-width="2.5"/><circle cx="37" cy="37" r="3.5" fill="#d3d3d3" stroke="#000" stroke-width="2.5"/></svg>
<div class="a" style="left:492px;top:719px;font-family:'Liberation Serif',serif;font-size:56px;line-height:60px;color:#000">A</div>
<svg class="a" style="left:492px;top:821px" width="42" height="42" viewBox="0 0 42 42"><path d="M20 3 V42 M2 20 H38" stroke="#000" stroke-width="3.5"/><path d="M14 8 L20 1 L26 8 Z M33 14 L41 20 L33 26 Z" fill="#000"/><path d="M29 8 H35 M32 5 V11 M5 31 H11" stroke="#000" stroke-width="2"/></svg>
<div class="a" style="left:1129px;top:903px;width:122px;height:40px;background:#514943;border:1px solid #6b625c;border-radius:2px;box-shadow:0 3px 10px rgba(0,0,0,.25);color:#f4f4f4;font-size:22px;line-height:38px;text-indent:13px">Designer</div><div class="a pop" style="left:1113px;top:605px;width:1050px;height:80px"></div>
<div class="a pop" style="left:1113px;top:693px;width:520px;height:80px"></div>
<div class="a plab" style="left:1123px;top:615px">inline</div>
<div class="a plab" style="left:1365px;top:615px">direction</div>
<div class="a plab" style="left:1497px;top:615px">wrap</div>
<div class="a plab" style="left:1565px;top:615px">align-content</div>
<div class="a plab" style="left:1793px;top:615px">justify-content</div>
<div class="a plab" style="left:1989.5px;top:615px">align-items</div>
<div class="a plab" style="left:1123px;top:703px">column:</div>
<div class="a plab" style="left:1235.5px;top:703px">row:</div>
<div class="a plab" style="left:1357.5px;top:703px">align-self</div>
<div class="a plab" style="left:1489px;top:703px">justify-self</div>
<svg class="a" style="left:1123px;top:644px" width="31" height="31" viewBox="0 0 31 31"><rect x="1.5" y="1.5" width="28" height="28" rx="8" fill="#6495ed" stroke="#000" stroke-width="3"/><rect x="8" y="8" width="15" height="15"/></svg>
<svg class="a" style="left:1155px;top:644px" width="31" height="31" viewBox="0 0 31 31"><rect x="1.5" y="1.5" width="28" height="28" rx="8" fill="#fff" stroke="#000" stroke-width="3"/><rect x="8" y="14.5" width="15" height="2"/></svg>
<div class="a" style="left:1201px;top:621px;width:140px;height:48px;border:2px solid #777;border-radius:5px;background:#fff"></div>
<div class="a" style="left:1211px;top:626px;font-size:29px;font-weight:bold;line-height:38px;color:#000">FLEX</div>
<svg class="a" style="left:1315px;top:638px" width="18" height="11" viewBox="0 0 18 11"><path d="M1.5 1.5 L9 9 L16.5 1.5" fill="none" stroke="#000" stroke-width="2"/></svg>
<svg class="a" style="left:1365px;top:644px" width="31" height="31" viewBox="0 0 31 31"><rect x="1.5" y="1.5" width="28" height="28" rx="8" fill="#6495ed" stroke="#000" stroke-width="3"/><rect x="7.5" y="6" width="5.5" height="10" fill="none" stroke="#000" stroke-width="1.8"/><rect x="16" y="5" width="8" height="12" rx="2"/><path d="M5 23.5 H22" stroke="#000" stroke-width="2"/><path d="M21 20 L26 23.5 L21 27 Z"/></svg>
<svg class="a" style="left:1397.5px;top:644px" width="31" height="31" viewBox="0 0 31 31"><rect x="1.5" y="1.5" width="28" height="28" rx="8" fill="#fff" stroke="#000" stroke-width="3"/><rect x="5.5" y="7.5" width="10" height="5" fill="none" stroke="#000" stroke-width="1.8"/><rect x="4.5" y="16.5" width="12" height="8" rx="2"/><path d="M22 5 V22" stroke="#000" stroke-width="2"/><path d="M18.5 21 L22 26 L25.5 21 Z"/></svg>
<svg class="a" style="left:1430px;top:644px" width="31" height="31" viewBox="0 0 31 31"><rect x="1.5" y="1.5" width="28" height="28" rx="8" fill="#fff" stroke="#000" stroke-width="3"/><rect x="6" y="5" width="8" height="12" rx="2"/><rect x="18" y="6" width="5.5" height="10" fill="none" stroke="#000" stroke-width="1.8"/><path d="M9 23.5 H26" stroke="#000" stroke-width="2"/><path d="M10 20 L5 23.5 L10 27 Z"/></svg>
<svg class="a" style="left:1462px;top:644px" width="31" height="31" viewBox="0 0 31 31"><rect x="1.5" y="1.5" width="28" height="28" rx="8" fill="#fff" stroke="#000" stroke-width="3"/><rect x="4.5" y="6.5" width="12" height="8" rx="2"/><rect x="5.5" y="18" width="10" height="5" fill="none" stroke="#000" stroke-width="1.8"/><path d="M22 9 V26" stroke="#000" stroke-width="2"/><path d="M18.5 10 L22 5 L25.5 10 Z"/></svg>
<svg class="a" style="left:1497px;top:644px" width="31" height="31" viewBox="0 0 31 31"><rect x="1.5" y="1.5" width="28" height="28" rx="8" fill="#6495ed" stroke="#000" stroke-width="3"/><rect x="4.5" y="10.5" width="4" height="9" rx="1.5" fill="none" stroke="#000" stroke-width="1.6"/><rect x="12" y="10" width="7" height="10" rx="3"/><rect x="22.5" y="10.5" width="4" height="9" rx="1.5" fill="none" stroke="#000" stroke-width="1.6"/></svg>
<svg class="a" style="left:1530px;top:644px" width="31" height="31" viewBox="0 0 31 31"><rect x="1.5" y="1.5" width="28" height="28" rx="8" fill="#fff" stroke="#000" stroke-width="3"/><rect x="4.5" y="5" width="4" height="8" rx="1.5" fill="none" stroke="#000" stroke-width="1.6"/><rect x="12" y="4.5" width="7" height="9" rx="3"/><rect x="22.5" y="5" width="4" height="8" rx="1.5" fill="none" stroke="#000" stroke-width="1.6"/><rect x="4" y="17" width="5" height="9" rx="2.5"/><rect x="13" y="17.5" width="4" height="8" rx="1.5" fill="none" stroke="#000" stroke-width="1.6"/><rect x="21.5" y="17" width="6" height="9" rx="2.5"/></svg>
<svg class="a" style="left:1565px;top:644px" width="31" height="31" viewBox="0 0 31 31"><rect x="1.5" y="1.5" width="28" height="28" rx="8" fill="#fff" stroke="#000" stroke-width="3"/><rect x="4" y="5.5" width="23" height="2"/><rect x="7" y="6" width="17" height="6" rx="2"/><rect x="7" y="16" width="17" height="6" rx="2"/></svg>
<svg class="a" style="left:1597.5px;top:644px" width="31" height="31" viewBox="0 0 31 31"><rect x="1.5" y="1.5" width="28" height="28" rx="8" fill="#fff" stroke="#000" stroke-width="3"/><rect x="7" y="6" width="17" height="6" rx="2"/><rect x="3.5" y="14.5" width="24" height="2"/><rect x="7" y="19" width="17" height="6" rx="2"/></svg>
<svg class="a" style="left:1630px;top:644px" width="31" height="31" viewBox="0 0 31 31"><rect x="1.5" y="1.5" width="28" height="28" rx="8" fill="#fff" stroke="#000" stroke-width="3"/><rect x="7" y="9" width="17" height="6" rx="2"/><rect x="7" y="18" width="17" height="6" rx="2"/><rect x="3.5" y="23.5" width="24" height="2"/></svg>
<svg class="a" style="left:1662px;top:644px" width="31" height="31" viewBox="0 0 31 31"><rect x="1.5" y="1.5" width="28" height="28" rx="8" fill="#fff" stroke="#000" stroke-width="3"/><rect x="4" y="4" width="23" height="1.8"/><rect x="7" y="7.5" width="17" height="6" rx="2"/><rect x="7" y="17" width="17" height="6" rx="2"/><rect x="4" y="25" width="23" height="1.8"/></svg>
<svg class="a" style="left:1694.5px;top:644px" width="31" height="31" viewBox="0 0 31 31"><rect x="1.5" y="1.5" width="28" height="28" rx="8" fill="#fff" stroke="#000" stroke-width="3"/><rect x="4" y="4" width="23" height="1.8"/><rect x="7" y="8" width="17" height="6" rx="2"/><rect x="7" y="17" width="17" height="6" rx="2"/><rect x="4" y="25" width="23" height="1.8"/></svg>
<svg class="a" style="left:1726.5px;top:644px" width="31" height="31" viewBox="0 0 31 31"><rect x="1.5" y="1.5" width="28" height="28" rx="8" fill="#fff" stroke="#000" stroke-width="3"/><rect x="4" y="4" width="23" height="1.8"/><rect x="6.5" y="5" width="18" height="7" rx="2"/><rect x="6.5" y="19" width="18" height="7" rx="2"/><rect x="4" y="25" width="23" height="1.8"/></svg>
<svg class="a" style="left:1759px;top:644px" width="31" height="31" viewBox="0 0 31 31"><rect x="1.5" y="1.5" width="28" height="28" rx="8" fill="#fff" stroke="#000" stroke-width="3"/><rect x="4" y="4" width="23" height="1.8"/><rect x="6.5" y="5" width="18" height="9.5" rx="1.5"/><rect x="6.5" y="16.5" width="18" height="9.5" rx="1.5"/><rect x="4" y="25" width="23" height="1.8"/></svg>
<svg class="a" style="left:1794px;top:644px" width="31" height="31" viewBox="0 0 31 31"><rect x="1.5" y="1.5" width="28" height="28" rx="8" fill="#fff" stroke="#000" stroke-width="3"/><rect x="4.5" y="5" width="1.8" height="21"/><rect x="7.5" y="10" width="4" height="10" rx="1.5"/><rect x="13.5" y="10" width="4" height="10" rx="1.5"/></svg>
<svg class="a" style="left:1826px;top:644px" width="31" height="31" viewBox="0 0 31 31"><rect x="1.5" y="1.5" width="28" height="28" rx="8" fill="#fff" stroke="#000" stroke-width="3"/><rect x="14.5" y="4" width="1.8" height="23"/><rect x="8" y="10" width="4" height="10" rx="1.5"/><rect x="19" y="10" width="4" height="10" rx="1.5"/></svg>
<svg class="a" style="left:1858.5px;top:644px" width="31" height="31" viewBox="0 0 31 31"><rect x="1.5" y="1.5" width="28" height="28" rx="8" fill="#fff" stroke="#000" stroke-width="3"/><rect x="14" y="10" width="4" height="10" rx="1.5"/><rect x="20" y="10" width="4" height="10" rx="1.5"/><rect x="25" y="5" width="1.8" height="21"/></svg>
<svg class="a" style="left:1890.5px;top:644px" width="31" height="31" viewBox="0 0 31 31"><rect x="1.5" y="1.5" width="28" height="28" rx="8" fill="#fff" stroke="#000" stroke-width="3"/><rect x="4.5" y="5" width="1.8" height="21"/><rect x="9" y="10" width="4" height="10" rx="1.5"/><rect x="18" y="10" width="4" height="10" rx="1.5"/><rect x="25" y="5" width="1.8" height="21"/></svg>
<svg class="a" style="left:1922.5px;top:644px" width="31" height="31" viewBox="0 0 31 31"><rect x="1.5" y="1.5" width="28" height="28" rx="8" fill="#fff" stroke="#000" stroke-width="3"/><rect x="4.5" y="5" width="1.8" height="21"/><rect x="9.5" y="10" width="4" height="10" rx="1.5"/><rect x="17.5" y="10" width="4" height="10" rx="1.5"/><rect x="25" y="5" width="1.8" height="21"/></svg>
<svg class="a" style="left:1954.5px;top:644px" width="31" height="31" viewBox="0 0 31 31"><rect x="1.5" y="1.5" width="28" height="28" rx="8" fill="#fff" stroke="#000" stroke-width="3"/><rect x="4.5" y="5" width="1.8" height="21"/><rect x="7" y="10" width="4" height="10" rx="1.5"/><rect x="20" y="10" width="4" height="10" rx="1.5"/><rect x="25" y="5" width="1.8" height="21"/></svg>
<svg class="a" style="left:1989.5px;top:644px" width="31" height="31" viewBox="0 0 31 31"><rect x="1.5" y="1.5" width="28" height="28" rx="8" fill="#fff" stroke="#000" stroke-width="3"/><rect x="5" y="5" width="21" height="2.2"/><rect x="8" y="6" width="5" height="10" rx="2"/><rect x="16" y="6" width="5" height="18" rx="2"/></svg>
<svg class="a" style="left:2022px;top:644px" width="31" height="31" viewBox="0 0 31 31"><rect x="1.5" y="1.5" width="28" height="28" rx="8" fill="#fff" stroke="#000" stroke-width="3"/><rect x="4" y="14.5" width="23" height="2.2"/><rect x="8" y="10" width="5" height="11" rx="2"/><rect x="16" y="6" width="5" height="19" rx="2"/></svg>
<svg class="a" style="left:2054px;top:644px" width="31" height="31" viewBox="0 0 31 31"><rect x="1.5" y="1.5" width="28" height="28" rx="8" fill="#fff" stroke="#000" stroke-width="3"/><rect x="5" y="24" width="21" height="2.2"/><rect x="8" y="15" width="5" height="10" rx="2"/><rect x="16" y="7" width="5" height="18" rx="2"/></svg>
<svg class="a" style="left:2086px;top:644px" width="31" height="31" viewBox="0 0 31 31"><rect x="1.5" y="1.5" width="28" height="28" rx="8" fill="#fff" stroke="#000" stroke-width="3"/><rect x="5" y="5" width="21" height="2"/><rect x="5" y="24" width="21" height="2"/><rect x="8" y="6" width="5" height="19"/><rect x="16" y="6" width="5" height="19"/></svg>
<svg class="a" style="left:2118.5px;top:644px" width="31" height="31" viewBox="0 0 31 31"><rect x="1.5" y="1.5" width="28" height="28" rx="8" fill="#fff" stroke="#000" stroke-width="3"/><path d="M8 22 L15.5 5 L23 22 M10.5 16.5 H20.5" fill="none" stroke="#000" stroke-width="2"/><rect x="5" y="24" width="21" height="2"/></svg>
<div class="a" style="left:1123px;top:733px;width:97px;height:31px;border:2px solid #777;border-radius:5px;background:#fff;font-size:27px;line-height:27px;text-indent:4px;color:#000">1</div>
<div class="a" style="left:1235.5px;top:733px;width:97px;height:31px;border:2px solid #777;border-radius:5px;background:#fff;font-size:27px;line-height:27px;text-indent:4px;color:#000">1</div>
<svg class="a" style="left:1357.5px;top:733px" width="31" height="31" viewBox="0 0 31 31"><rect x="1.5" y="1.5" width="28" height="28" rx="8" fill="#fff" stroke="#000" stroke-width="3"/><rect x="5" y="5" width="21" height="2.2"/><rect x="8" y="6" width="5" height="10" rx="2"/><rect x="16" y="6" width="5" height="18" rx="2"/></svg>
<svg class="a" style="left:1390px;top:733px" width="31" height="31" viewBox="0 0 31 31"><rect x="1.5" y="1.5" width="28" height="28" rx="8" fill="#fff" stroke="#000" stroke-width="3"/><rect x="4" y="14.5" width="23" height="2.2"/><rect x="8" y="10" width="5" height="11" rx="2"/><rect x="16" y="6" width="5" height="19" rx="2"/></svg>
<svg class="a" style="left:1422.5px;top:733px" width="31" height="31" viewBox="0 0 31 31"><rect x="1.5" y="1.5" width="28" height="28" rx="8" fill="#fff" stroke="#000" stroke-width="3"/><rect x="5" y="24" width="21" height="2.2"/><rect x="8" y="15" width="5" height="10" rx="2"/><rect x="16" y="7" width="5" height="18" rx="2"/></svg>
<svg class="a" style="left:1454.5px;top:733px" width="31" height="31" viewBox="0 0 31 31"><rect x="1.5" y="1.5" width="28" height="28" rx="8" fill="#6495ed" stroke="#000" stroke-width="3"/><rect x="5" y="5" width="21" height="2"/><rect x="5" y="24" width="21" height="2"/><rect x="8" y="6" width="5" height="19"/><rect x="16" y="6" width="5" height="19"/><rect x="13.5" y="7" width="2" height="17" fill="#79a8f5"/></svg>
<svg class="a" style="left:1490px;top:733px" width="31" height="31" viewBox="0 0 31 31"><rect x="1.5" y="1.5" width="28" height="28" rx="8" fill="#fff" stroke="#000" stroke-width="3"/><rect x="4.5" y="5" width="2" height="21"/><rect x="6" y="8" width="9" height="5" rx="2"/><rect x="6" y="17" width="9" height="5" rx="2"/><rect x="16.5" y="5" width="2" height="21"/><rect x="18" y="8" width="9" height="5" rx="2"/><rect x="18" y="17" width="9" height="5" rx="2"/></svg>
<svg class="a" style="left:1522.5px;top:733px" width="31" height="31" viewBox="0 0 31 31"><rect x="1.5" y="1.5" width="28" height="28" rx="8" fill="#fff" stroke="#000" stroke-width="3"/><rect x="9" y="5" width="2" height="21"/><rect x="5.5" y="8" width="9" height="5" rx="2"/><rect x="5.5" y="17" width="9" height="5" rx="2"/><rect x="20.5" y="5" width="2" height="21"/><rect x="17" y="8" width="9" height="5" rx="2"/><rect x="17" y="17" width="9" height="5" rx="2"/></svg>
<svg class="a" style="left:1555px;top:733px" width="31" height="31" viewBox="0 0 31 31"><rect x="1.5" y="1.5" width="28" height="28" rx="8" fill="#fff" stroke="#000" stroke-width="3"/><rect x="13" y="5" width="2" height="21"/><rect x="5" y="8" width="9" height="5" rx="2"/><rect x="5" y="17" width="9" height="5" rx="2"/><rect x="25" y="5" width="2" height="21"/><rect x="17" y="8" width="9" height="5" rx="2"/><rect x="17" y="17" width="9" height="5" rx="2"/></svg>
<svg class="a" style="left:1587px;top:733px" width="31" height="31" viewBox="0 0 31 31"><rect x="1.5" y="1.5" width="28" height="28" rx="8" fill="#6495ed" stroke="#000" stroke-width="3"/><rect x="4.5" y="5" width="2" height="21"/><rect x="6" y="8" width="20" height="5"/><rect x="6" y="17" width="20" height="5"/><rect x="24.5" y="5" width="2" height="21"/><rect x="14.5" y="6" width="2" height="19" fill="#79a8f5"/></svg><!-- RIGHT -->
<div class="a" style="left:2410px;top:246px;width:598px;height:1492px;background:#000"></div>
<div class="a hdr" style="left:2410px;top:246px;width:598px"><div class="a t">Properties</div><div class="a x" style="left:564px">X</div></div>
<div class="a" style="left:2410px;top:296px;width:598px;height:893px;background:#2e3344"></div>
<div class="a mono pl" style="left:2423px;top:312px">Type:</div>
<div class="a" style="left:2576px;top:309px;font-size:23.5px;line-height:30px;color:#f2d8a7">button</div>
<div class="a" style="left:2422px;top:358px;width:18px;height:17px;border:2px solid #fff"></div>
<div class="a mono pl" style="left:2445px;top:353px">Id:</div>
<div class="a" style="left:2422px;top:396px;width:18px;height:18px;background:#fff"></div>
<div class="a" style="left:2444px;top:396px;width:18px;height:18px;background:#fff"></div>
<div class="a mono pl" style="left:2467px;top:392px">Content:</div>
<div class="a" style="left:2572px;top:346px;width:424px;height:39px;border:2px solid #8a8a8a"></div>
<div class="a" style="left:2572px;top:386px;width:424px;height:38px;border:2px solid #8a8a8a;font-size:26px;line-height:34px;color:#fff;text-indent:5px">Button</div>
<div class="a" style="left:2410px;top:430px;width:598px;height:60px;background:#242734"></div>
<div class="a" style="left:2410px;top:430px;width:124px;height:60px;background:#2e3344"></div>
<div class="a" style="left:2410px;top:430px;width:124px;height:6px;background:#e91e63"></div>
<div class="a" style="left:2540px;top:430px;width:407px;height:60px;overflow:hidden">
<div class="a nav" style="left:4.5px;top:16px">LAYOUT</div>
<div class="a nav" style="left:131px;top:16px">FLEX</div>
<div class="a nav" style="left:219px;top:16px">GRID</div>
<div class="a nav" style="left:306px;top:16px">PROPERTIES</div>
</div>
<div class="a nav" style="left:2421px;top:446px">STYLES</div>
<svg class="a" style="left:2960px;top:450px" width="38" height="22" viewBox="0 0 38 22"><path d="M16 3 L2 12 L16 21 M36 3 L22 12 L36 21" fill="none" stroke="#fff" stroke-width="1.8"/></svg>
<div class="a mono" style="left:2426px;top:519px;font-size:20px;line-height:24px;color:#fff">&lt;local&gt;</div>
<div class="a" style="left:2448px;top:554px;width:544px;height:287px;background:#56697a"></div>
<div class="a cell" style="left:2451px;top:557px;width:268px;height:42px">grid-column</div>
<div class="a cell" style="left:2723px;top:557px;width:266px;height:42px">1</div>
<div class="a" style="left:2426px;top:569px;width:18px;height:18px;background:#fff"></div>
<div class="a cell" style="left:2451px;top:605px;width:268px;height:42px">grid-row</div>
<div class="a cell" style="left:2723px;top:605px;width:266px;height:42px">4 / span 3</div>
<div class="a" style="left:2426px;top:617px;width:18px;height:18px;background:#fff"></div>
<div class="a cell" style="left:2451px;top:653px;width:268px;height:42px">align-self</div>
<div class="a cell" style="left:2723px;top:653px;width:266px;height:42px">stretch</div>
<div class="a" style="left:2426px;top:665px;width:18px;height:18px;background:#fff"></div>
<div class="a cell" style="left:2451px;top:701px;width:268px;height:42px">justify-self</div>
<div class="a cell" style="left:2723px;top:701px;width:266px;height:42px">stretch</div>
<div class="a" style="left:2426px;top:713px;width:18px;height:18px;background:#fff"></div>
<div class="a cell" style="left:2451px;top:749px;width:268px;height:42px">display</div>
<div class="a cell" style="left:2723px;top:749px;width:266px;height:42px">&nbsp;flex</div>
<div class="a" style="left:2426px;top:761px;width:18px;height:18px;background:#fff"></div>
<div class="a cell" style="left:2451px;top:797px;width:268px;height:42px"></div>
<div class="a cell" style="left:2723px;top:797px;width:266px;height:42px"></div>
<svg class="a" style="left:2966px;top:765px" width="18" height="11" viewBox="0 0 18 11"><path d="M1 1 L9 9 L17 1" fill="none" stroke="#fff" stroke-width="2"/></svg>
<div class="a" style="left:2425px;top:854px;font-size:26px;line-height:30px;color:#eee">*</div>
<div class="a" style="left:2800px;width:192px;text-align:right;top:853px;font-size:20px;line-height:26px;color:#fff;text-decoration:underline">stylesheet.css</div>
<div class="a" style="left:2448px;top:890px;width:544px;height:95px;background:#56697a"></div>
<div class="a cell" style="left:2451px;top:893px;width:268px;height:42px">font-size</div>
<div class="a cell" style="left:2723px;top:893px;width:266px;height:42px">20px</div>
<div class="a" style="left:2426px;top:905px;width:18px;height:18px;background:#fff"></div>
<div class="a cell" style="left:2451px;top:941px;width:268px;height:42px"></div>
<div class="a cell" style="left:2723px;top:941px;width:266px;height:42px"></div>
<div class="a" style="left:2410px;top:1189px;width:598px;height:5px;background:#000"></div>
<div class="a hdr" style="left:2410px;top:1194px;width:598px"><div class="a t">Refactor</div><div class="a x" style="left:564px">X</div></div>
<div class="a" style="left:2410px;top:1244px;width:598px;height:186px;background:#fff"></div>
<div class="a mono" style="left:2421px;top:1265px;font-size:20px;line-height:26px;color:#222">search</div>
<div class="a mono" style="left:2421px;top:1308px;font-size:20px;line-height:26px;color:#222">replace</div>
<div class="a" style="left:2500px;top:1255px;width:497px;height:40px;background:#fff;border:2px solid #777;border-radius:5px;font-size:26px;line-height:36px;text-indent:8px;color:#111">(.*)</div>
<div class="a" style="left:2500px;top:1298px;width:497px;height:40px;background:#fff;border:2px solid #777;border-radius:5px;font-size:26px;line-height:36px;text-indent:8px;color:#111">$1</div>
<div class="a" style="left:2500px;top:1342px;width:497px;height:40px;background:#efefef;border:2px solid #777;border-radius:5px;font-size:26px;line-height:36px;text-align:center;color:#111">replace</div>
<div class="a" style="left:2707px;top:1407px;width:4px;height:3px;background:#aaa"></div>
<div class="a" style="left:2410px;top:1430px;width:598px;height:10px;background:#000"></div>
<div class="a hdr" style="left:2410px;top:1440px;width:598px"><div class="a t">Debug</div><div class="a x" style="left:564px">X</div></div>
<div class="a" style="left:2410px;top:1490px;width:598px;height:246px;background:#d9d9d9;border-bottom-right-radius:26px;overflow:hidden">
<div class="a" style="left:2px;top:1px;width:594px;height:57px;background:#999"></div>
<div class="a" style="left:11px;top:8px;font-size:31px;font-weight:bold;color:#fff;line-height:44px">Styling</div>
<div class="a" style="left:1px;top:60px;width:355px;height:56px;background:#f2f2f2"></div>
<div class="a" style="left:358px;top:60px;width:238px;height:56px;background:#f2f2f2"></div>
<div class="a dbg" style="left:11px;top:60px">display</div>
<div class="a dbg" style="left:367px;top:60px">block</div>
<div class="a" style="left:1px;top:118px;width:355px;height:56px;background:#fff"></div>
<div class="a" style="left:358px;top:118px;width:238px;height:56px;background:#fff"></div>
<div class="a dbg" style="left:11px;top:118px">position</div>
<div class="a dbg" style="left:367px;top:118px">static</div>
<div class="a" style="left:1px;top:176px;width:355px;height:56px;background:#f2f2f2"></div>
<div class="a" style="left:358px;top:176px;width:238px;height:56px;background:#f2f2f2"></div>
<div class="a dbg" style="left:11px;top:176px">visibility</div>
<div class="a dbg" style="left:367px;top:176px">visible</div>
<div class="a" style="left:1px;top:234px;width:355px;height:56px;background:#fff"></div>
<div class="a" style="left:358px;top:234px;width:238px;height:56px;background:#fff"></div>
<div class="a dbg" style="left:11px;top:234px"></div>
<div class="a dbg" style="left:367px;top:234px"></div>
</div>
<div class="a" style="left:0;top:1736px;width:3010px;height:2px;background:#0a0a0a"></div>
<div class="a" style="left:3008px;top:0;width:2px;height:1738px;background:#151515"></div></body></html>
